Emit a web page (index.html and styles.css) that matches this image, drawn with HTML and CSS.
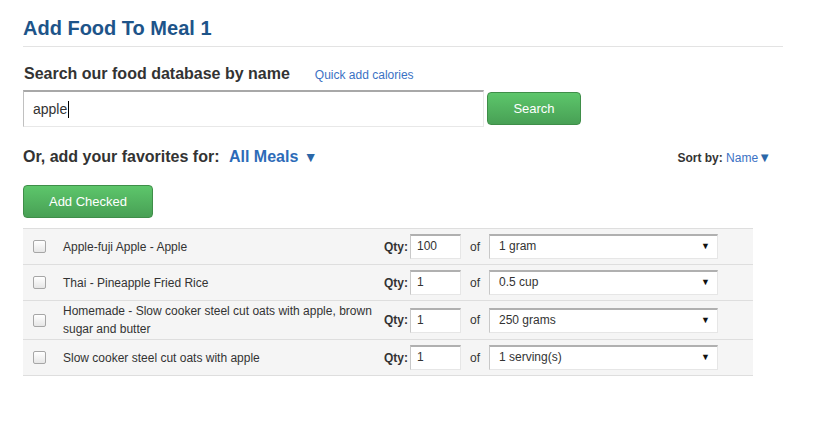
FILE: index.html
```html
<!DOCTYPE html>
<html>
<head>
<meta charset="utf-8">
<link rel="stylesheet" href="styles.css">
</head>
<body>
<div class="page">
  <h1 class="title">Add Food To Meal 1</h1>
  <div class="search-head">
    <h2 class="subtitle">Search our food database by name</h2>
    <a class="link" href="#">Quick add calories</a>
  </div>
  <div class="search-row">
    <div class="search-input">apple<span class="caret"></span></div>
    <button class="btn btn-search">Search</button>
  </div>
  <div class="fav-row">
    <div class="fav-title">Or, add your favorites for: <span class="meals">All Meals <span class="tri">&#9660;</span></span></div>
    <div class="sort">Sort by: <span class="sort-link">Name<span class="tri-s">&#9660;</span></span></div>
  </div>
  <button class="btn btn-add">Add Checked</button>
  <div class="list">
    <div class="row">
      <div class="cb-cell"><span class="cb"></span></div>
      <div class="name">Apple-fuji Apple - Apple</div>
      <div class="qty">Qty:</div>
      <div class="qty-input">100</div>
      <div class="of">of</div>
      <div class="select"><span>1 gram</span><span class="arrow">&#9660;</span></div>
    </div>
    <div class="row">
      <div class="cb-cell"><span class="cb"></span></div>
      <div class="name">Thai - Pineapple Fried Rice</div>
      <div class="qty">Qty:</div>
      <div class="qty-input">1</div>
      <div class="of">of</div>
      <div class="select"><span>0.5 cup</span><span class="arrow">&#9660;</span></div>
    </div>
    <div class="row">
      <div class="cb-cell"><span class="cb"></span></div>
      <div class="name">Homemade - Slow cooker steel cut oats with apple, brown sugar and butter</div>
      <div class="qty">Qty:</div>
      <div class="qty-input">1</div>
      <div class="of">of</div>
      <div class="select"><span>250 grams</span><span class="arrow">&#9660;</span></div>
    </div>
    <div class="row">
      <div class="cb-cell"><span class="cb"></span></div>
      <div class="name">Slow cooker steel cut oats with apple</div>
      <div class="qty">Qty:</div>
      <div class="qty-input">1</div>
      <div class="of">of</div>
      <div class="select"><span>1 serving(s)</span><span class="arrow">&#9660;</span></div>
    </div>
  </div>
</div>
</body>
</html>
```
FILE: styles.css
```css
* { box-sizing: border-box; }
body {
  margin: 0;
  background: #fff;
  font-family: "Liberation Sans", Arial, sans-serif;
  color: #333;
}
.page {
  padding: 14px 0 0 23px;
  width: 783px;
}
.title {
  margin: 0;
  font-size: 20px;
  font-weight: bold;
  color: #1d5489;
  line-height: 28px;
  padding-bottom: 4px;
  border-bottom: 1px solid #e3e3e3;
}
.search-head {
  display: flex;
  align-items: baseline;
  margin-top: 17px;
  padding-left: 1px;
}
.subtitle {
  margin: 0;
  font-size: 16px;
  font-weight: bold;
  color: #333;
  line-height: 20px;
}
.link {
  margin-left: 25px;
  font-size: 12px;
  color: #3a72c4;
  text-decoration: none;
}
.search-row {
  display: flex;
  align-items: flex-start;
  margin-top: 6px;
}
.search-input {
  width: 461px;
  height: 37px;
  border: 1px solid #e8e8e8;
  border-top: 2px solid #a8a8a8;
  border-left: 1px solid #c0c0c0;
  padding-left: 9px;
  font-size: 14px;
  line-height: 33px;
  color: #333;
  display: flex;
  align-items: center;
}
.caret {
  display: inline-block;
  width: 1px;
  height: 17px;
  background: #000;
  margin-left: 1px;
}
.btn {
  border: 1px solid #3f8e49;
  border-radius: 4px;
  background: linear-gradient(#5dc66b, #48a055);
  color: #fff;
  font-family: "Liberation Sans", Arial, sans-serif;
  font-size: 13px;
  padding: 0;
}
.btn-search {
  width: 94px;
  height: 33px;
  margin-left: 3px;
  margin-top: 2px;
}
.fav-row {
  display: flex;
  justify-content: space-between;
  align-items: baseline;
  margin-top: 20px;
  width: 748px;
}
.fav-title {
  font-size: 16px;
  font-weight: bold;
  color: #333;
  line-height: 20px;
}
.meals {
  color: #2d6bb8;
  margin-left: 5px;
}
.tri {
  font-size: 14px;
  color: #2a67a8;
  margin-left: 1px;
}
.sort {
  font-size: 12px;
  font-weight: bold;
  color: #333;
}
.sort-link {
  color: #3a72c4;
  font-weight: normal;
}
.tri-s {
  font-size: 13px;
  color: #2a67a8;
}
.btn-add {
  display: block;
  width: 130px;
  height: 33px;
  margin-top: 18px;
}
.list {
  margin-top: 10px;
  width: 730px;
  border-bottom: 1px solid #dedede;
}
.row {
  display: flex;
  align-items: center;
  min-height: 36px;
  background: #f5f5f5;
  border-top: 1px solid #dedede;
  font-size: 12px;
}
.cb-cell {
  width: 40px;
  padding-left: 10px;
  display: flex;
}
.cb {
  width: 13px;
  height: 13px;
  border: 1px solid #a6a6a6;
  border-radius: 2px;
  background: linear-gradient(#fff, #e6e6e6);
}
.name {
  width: 321px;
  line-height: 18px;
  padding: 1px 0;
  color: #333;
}
.qty {
  font-weight: bold;
  width: 26px;
}
.qty-input, .select {
  height: 25px;
  background: #fff;
  border: 1px solid #e6e6e6;
  border-top: 2px solid #b0b0b0;
  border-left: 1px solid #c8c8c8;
  font-size: 12px;
  line-height: 21px;
  padding-left: 6px;
}
.qty-input {
  width: 51px;
}
.of {
  width: 28px;
  text-align: center;
}
.select {
  width: 229px;
  display: flex;
  justify-content: space-between;
  padding-left: 9px;
  padding-right: 7px;
}
.arrow {
  font-size: 9px;
  color: #111;
}
```
